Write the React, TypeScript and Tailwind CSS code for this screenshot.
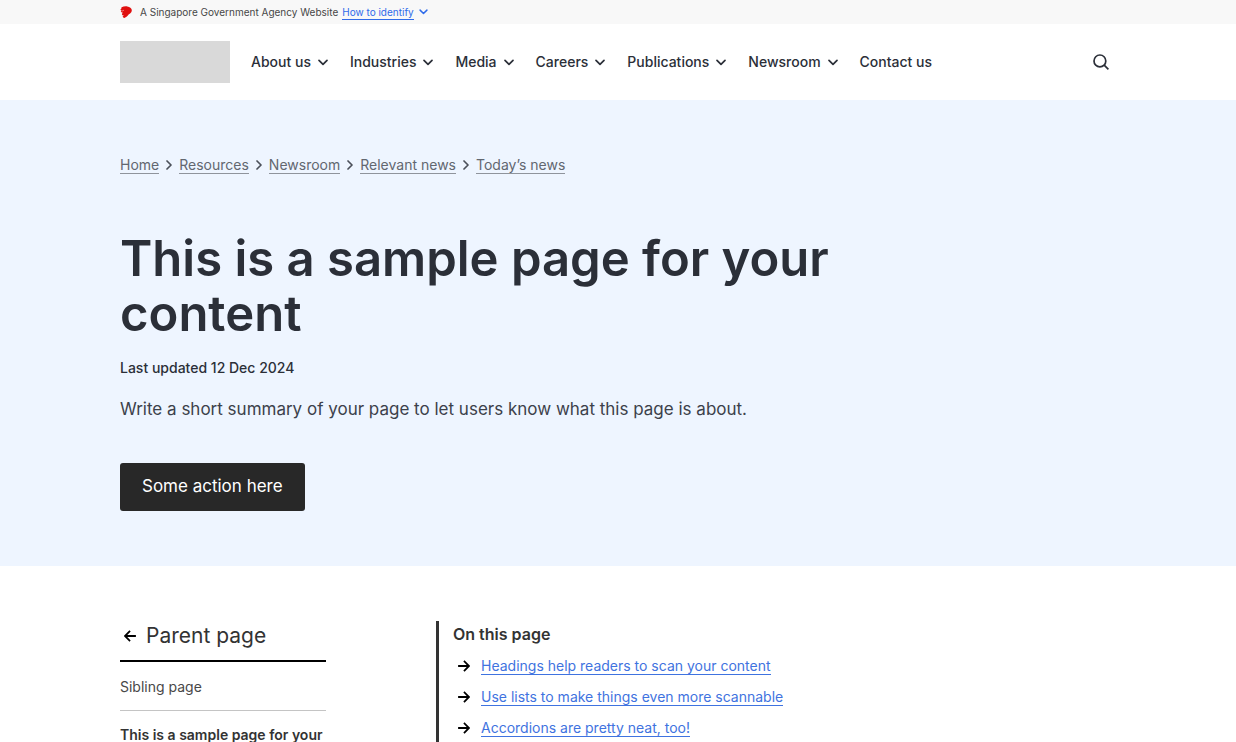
import React from "react";

type IconProps = { className?: string };

function ChevronDown({ className }: IconProps) {
  return (
    <svg viewBox="0 0 10 7" className={className} fill="none" stroke="currentColor" strokeWidth="1.7" strokeLinecap="round" strokeLinejoin="round" aria-hidden="true">
      <path d="M1 1.300l4 4 4-4" />
    </svg>
  );
}

function ChevronRight({ className }: IconProps) {
  return (
    <svg viewBox="0 0 6 10" className={className} fill="none" stroke="currentColor" strokeWidth="1.7" strokeLinecap="round" strokeLinejoin="round" aria-hidden="true">
      <path d="M1 1l4 4-4 4" />
    </svg>
  );
}

function ArrowRight({ className }: IconProps) {
  return (
    <svg viewBox="0 0 12 12" className={className} fill="none" stroke="currentColor" strokeWidth="1.8" strokeLinecap="square" aria-hidden="true">
      <path d="M1 6h9.6M6.6 1.6L11 6l-4.4 4.4" />
    </svg>
  );
}

function SearchIcon({ className }: IconProps) {
  return (
    <svg viewBox="0 0 16 16" className={className} fill="none" stroke="currentColor" strokeWidth="1.7" aria-hidden="true">
      <circle cx="6.9" cy="6.9" r="5.9" />
      <path d="M11.2 11.2L15.4 15.4" />
    </svg>
  );
}

function LionHead({ className }: IconProps) {
  return (
    <svg viewBox="0 0 12 13" className={className} aria-hidden="true">
      <path
        fill="#e0100f"
        d="M1.600 1.300C3.200.5 5.200.1 7.300.4c2.500.3 4.300 1.700 4.500 3.700.1 1.500-.6 2.700-1.700 3.300-.7.4-1.100.7-1.500 1.200-.9 1.300-2.300 2.600-4.300 3.400-.8-.3-1.400-.8-1.700-1.500.6-.3 1-.7 1.200-1.200-.6.200-1.200.1-1.700-.2.100-.5 0-.9-.3-1.200.500-.5.800-.9.900-1.500C2 6.500 1.200 6.300.8 5.700c.4-.3.500-.7.400-1.100C.8 4.300.5 3.900.4 3.500c.5-.2.800-.5 1-.9-.1-.4-.1-.9.200-1.300z"
      />
      <path fill="none" stroke="#f8f8f8" strokeWidth=".5" d="M1.400 4.800c1 .2 1.800 0 2.500-.6" />
    </svg>
  );
}

const navItems = [
  { label: "About us", menu: true },
  { label: "Industries", menu: true },
  { label: "Media", menu: true },
  { label: "Careers", menu: true },
  { label: "Publications", menu: true },
  { label: "Newsroom", menu: true },
  { label: "Contact us", menu: false },
];

const crumbs = ["Home", "Resources", "Newsroom", "Relevant news", "Today’s news"];

const sections = [
  "Headings help readers to scan your content",
  "Use lists to make things even more scannable",
  "Accordions are pretty neat, too!",
];

export default function App() {
  return (
    <div className="min-h-screen bg-white font-['Inter',sans-serif] text-[#2b2f38]">
      <div className="bg-[#f8f8f8] px-[120px]">
        <div className="flex h-6 items-center text-[10px] leading-4 text-[#474747]">
          <LionHead className="mr-2 h-[13px] w-3" />
          <span>A Singapore Government Agency Website</span>
          <button type="button" className="ml-1 flex items-center gap-[5px] text-[#2f6bea]">
            <span className="border-b border-[#2f6bea] leading-[14px]">How to identify</span>
            <ChevronDown className="h-[6px] w-[9px]" />
          </button>
        </div>
      </div>

      <header className="flex h-[76px] items-center px-[120px]">
        <a href="#home" aria-label="Home" className="block h-[42px] w-[110px] shrink-0 bg-[#d9d9d9]" />
        <nav aria-label="Main" className="ml-[21px] flex gap-[22px] text-sm font-medium">
          {navItems.map((item) =>
            item.menu ? (
              <button key={item.label} type="button" className="flex items-center gap-[7px] whitespace-nowrap">
                {item.label}
                <ChevronDown className="h-[7px] w-[10px]" />
              </button>
            ) : (
              <a key={item.label} href="#contact" className="whitespace-nowrap">
                {item.label}
              </a>
            ),
          )}
        </nav>
        <button type="button" aria-label="Search" className="mr-[7px] ml-auto">
          <SearchIcon className="size-4" />
        </button>
      </header>

      <section className="bg-[#eef5ff] px-[120px] pt-14 pb-[55px]">
        <nav aria-label="Breadcrumb">
          <ol className="flex items-center gap-[7px] text-sm leading-[18px] text-[#626770]">
            {crumbs.map((crumb, i) => (
              <li key={crumb} className="flex items-center gap-[7px]">
                {i > 0 && <ChevronRight className="h-[10px] w-[6px] text-[#4b505a]" />}
                <a href="#crumb" className="border-b border-[#8f949c] leading-[17px]">
                  {crumb}
                </a>
              </li>
            ))}
          </ol>
        </nav>
        <h1 className="mt-[57px] max-w-[740px] text-[49px] leading-[55px] font-semibold">
          This is a sample page for your content
        </h1>
        <p className="mt-[17px] text-sm leading-5 font-medium">Last updated 12 Dec 2024</p>
        <p className="mt-[17px] text-[17px] leading-7 text-[#3c414b]">
          Write a short summary of your page to let users know what this page is about.
        </p>
        <button type="button" className="mt-10 h-12 rounded-[3px] bg-[#282828] px-[22px] text-[17px] text-white">
          Some action here
        </button>
      </section>

      <div className="flex gap-[110px] px-[120px] pt-[55px] text-[#333333]">
        <aside className="w-[206px] shrink-0">
          <a href="#parent" className="flex items-center gap-[10px] border-b-2 border-black pb-[10px] pl-1 text-[21px] leading-[29px]">
            <ArrowRight className="size-3 rotate-180 text-black" />
            Parent page
          </a>
          <a href="#sibling" className="block border-b border-[#c4c4c4] pt-[15px] pb-[13px] text-sm leading-5 text-[#484848]">
            Sibling page
          </a>
          <a href="#current" aria-current="page" className="block pt-[14px] text-sm leading-5 font-semibold">
            This is a sample page for your content
          </a>
        </aside>
        <main className="grow border-l-[3px] border-[#333333] pb-6 pl-[14px]">
          <h2 className="text-base leading-[26px] font-semibold">On this page</h2>
          <ul className="mt-[9px] flex flex-col gap-[11px]">
            {sections.map((title) => (
              <li key={title} className="flex h-5 items-center gap-[11px] pl-[5px] text-sm">
                <ArrowRight className="size-3 text-black" />
                <a href="#section" className="border-b border-[#3f73e0] leading-[17px] text-[#3f73e0]">
                  {title}
                </a>
              </li>
            ))}
          </ul>
        </main>
      </div>
    </div>
  );
}
